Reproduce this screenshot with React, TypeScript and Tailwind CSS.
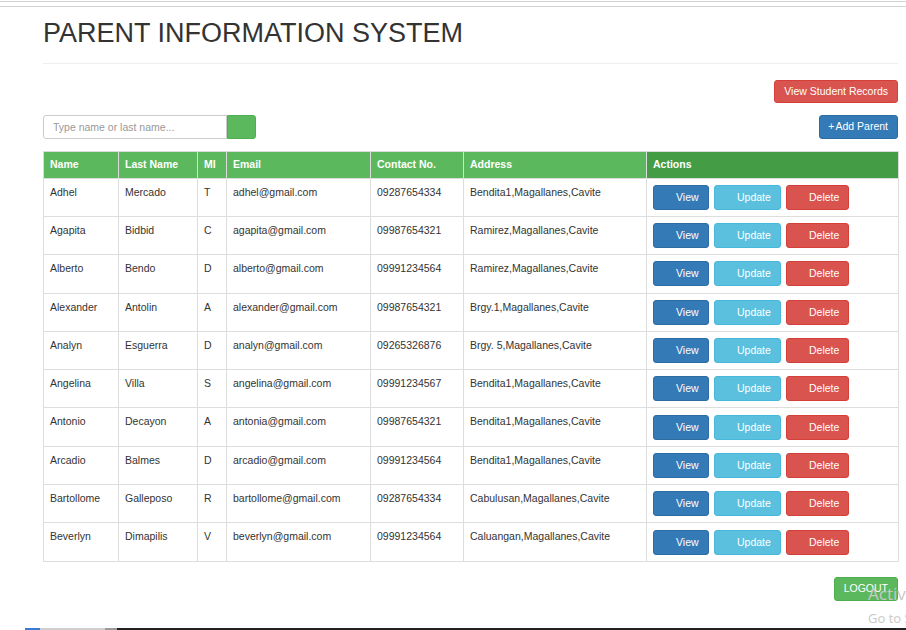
import React from "react";

const parents = [
  { first: "Adhel", last: "Mercado", mi: "T", email: "adhel@gmail.com", contact: "09287654334", address: "Bendita1,Magallanes,Cavite" },
  { first: "Agapita", last: "Bidbid", mi: "C", email: "agapita@gmail.com", contact: "09987654321", address: "Ramirez,Magallanes,Cavite" },
  { first: "Alberto", last: "Bendo", mi: "D", email: "alberto@gmail.com", contact: "09991234564", address: "Ramirez,Magallanes,Cavite" },
  { first: "Alexander", last: "Antolin", mi: "A", email: "alexander@gmail.com", contact: "09987654321", address: "Brgy.1,Magallanes,Cavite" },
  { first: "Analyn", last: "Esguerra", mi: "D", email: "analyn@gmail.com", contact: "09265326876", address: "Brgy. 5,Magallanes,Cavite" },
  { first: "Angelina", last: "Villa", mi: "S", email: "angelina@gmail.com", contact: "09991234567", address: "Bendita1,Magallanes,Cavite" },
  { first: "Antonio", last: "Decayon", mi: "A", email: "antonia@gmail.com", contact: "09987654321", address: "Bendita1,Magallanes,Cavite" },
  { first: "Arcadio", last: "Balmes", mi: "D", email: "arcadio@gmail.com", contact: "09991234564", address: "Bendita1,Magallanes,Cavite" },
  { first: "Bartollome", last: "Galleposo", mi: "R", email: "bartollome@gmail.com", contact: "09287654334", address: "Cabulusan,Magallanes,Cavite" },
  { first: "Beverlyn", last: "Dimapilis", mi: "V", email: "beverlyn@gmail.com", contact: "09991234564", address: "Caluangan,Magallanes,Cavite" },
];

const th = "h-[27px] px-[6px] text-left align-middle font-bold text-white border border-[#dcdcdc]";
const td = "px-[6px] pt-[6px] align-top border border-[#ddd]";
const btn = "h-[25px] rounded-[3px] pl-[22px] text-left text-[10.5px] leading-[15px] text-white border";

export default function App() {
  return (
    <div
      className="relative h-[630px] overflow-hidden bg-white text-[#333] text-[10.5px] leading-[15px]"
      style={{ fontFamily: '"Liberation Sans", Arial, sans-serif' }}
    >
      {/* top chrome lines */}
      <div className="mt-px h-[6px] border-y border-[#d2d2d2]" />

      <div className="ml-[43px] w-[855px]">
        <div className="mt-[12px] pb-[14px] border-b border-[#eee]">
          <h1 className="text-[27px] leading-[1.1] font-normal text-[#333]">PARENT INFORMATION SYSTEM</h1>
        </div>

        <div className="mt-[16px] flex justify-end">
          <button className="h-[23px] rounded-[3px] border border-[#d43f3a] bg-[#d9534f] px-[9px] text-[10.5px] text-white">
            View Student Records
          </button>
        </div>

        <div className="mt-[12px] flex items-center justify-between">
          <div className="flex h-[24px]">
            <input
              placeholder="Type name or last name..."
              className="h-[24px] w-[184px] rounded-l-[3px] border border-[#ccc] px-[9px] text-[10.5px] placeholder:text-[#999] outline-none"
            />
            <button className="h-[24px] w-[29px] rounded-r-[3px] border border-[#4cae4c] bg-[#5cb85c]" />
          </div>
          <button className="h-[24px] rounded-[3px] border border-[#2e6da4] bg-[#337ab7] pl-[8px] pr-[9px] text-[10.5px] text-white">
            <span className="mr-px">+</span>Add Parent
          </button>
        </div>

        <table className="mt-[12px] w-[855px] table-fixed border-collapse">
          <colgroup>
            <col className="w-[75px]" />
            <col className="w-[79px]" />
            <col className="w-[29px]" />
            <col className="w-[144px]" />
            <col className="w-[93px]" />
            <col className="w-[183px]" />
            <col className="w-[252px]" />
          </colgroup>
          <thead>
            <tr>
              <th className={`${th} bg-[#5cb85c]`}>Name</th>
              <th className={`${th} bg-[#5cb85c]`}>Last Name</th>
              <th className={`${th} bg-[#5cb85c]`}>MI</th>
              <th className={`${th} bg-[#5cb85c]`}>Email</th>
              <th className={`${th} bg-[#5cb85c]`}>Contact No.</th>
              <th className={`${th} bg-[#5cb85c]`}>Address</th>
              <th className={`${th} bg-[#449d44]`}>Actions</th>
            </tr>
          </thead>
          <tbody>
            {parents.map((p, i) => (
              <tr key={i} className="h-[38.3px]">
                <td className={td}>{p.first}</td>
                <td className={td}>{p.last}</td>
                <td className={td}>{p.mi}</td>
                <td className={td}>{p.email}</td>
                <td className={td}>{p.contact}</td>
                <td className={td}>{p.address}</td>
                <td className="px-[6px] align-middle border border-[#ddd]">
                  <div className="flex gap-[5px]">
                    <button className={`${btn} w-[56px] bg-[#337ab7] border-[#2e6da4]`}>View</button>
                    <button className={`${btn} w-[67px] bg-[#5bc0de] border-[#46b8da]`}>Update</button>
                    <button className={`${btn} w-[63px] bg-[#d9534f] border-[#d43f3a]`}>Delete</button>
                  </div>
                </td>
              </tr>
            ))}
          </tbody>
        </table>

        <div className="mt-[15px] flex justify-end">
          <button className="h-[24px] rounded-[3px] border border-[#4cae4c] bg-[#5cb85c] px-[9px] text-[10.5px] text-white">
            LOGOUT
          </button>
        </div>
      </div>

      {/* activation watermark */}
      <div
        className="absolute left-[868px] top-[583px] whitespace-nowrap text-[#c8c8c8]"
        style={{ fontFamily: '"Open Sans", "Noto Sans", sans-serif' }}
      >
        <div className="text-[17px] leading-[22px]">Activate Windows</div>
        <div className="mt-[4px] text-[13px] leading-[18px]">Go to Settings to activate Windows.</div>
      </div>

      {/* bottom taskbar edge */}
      <div className="absolute left-0 top-[628px] flex h-[2px] w-full">
        <div className="w-[25px] bg-white" />
        <div className="w-[15px] bg-[#3a7bd5]" />
        <div className="w-[65px] bg-[#cfcfcf]" />
        <div className="w-[12px] bg-[#9a9a9a]" />
        <div className="flex-1 bg-[#222]" />
      </div>
    </div>
  );
}
